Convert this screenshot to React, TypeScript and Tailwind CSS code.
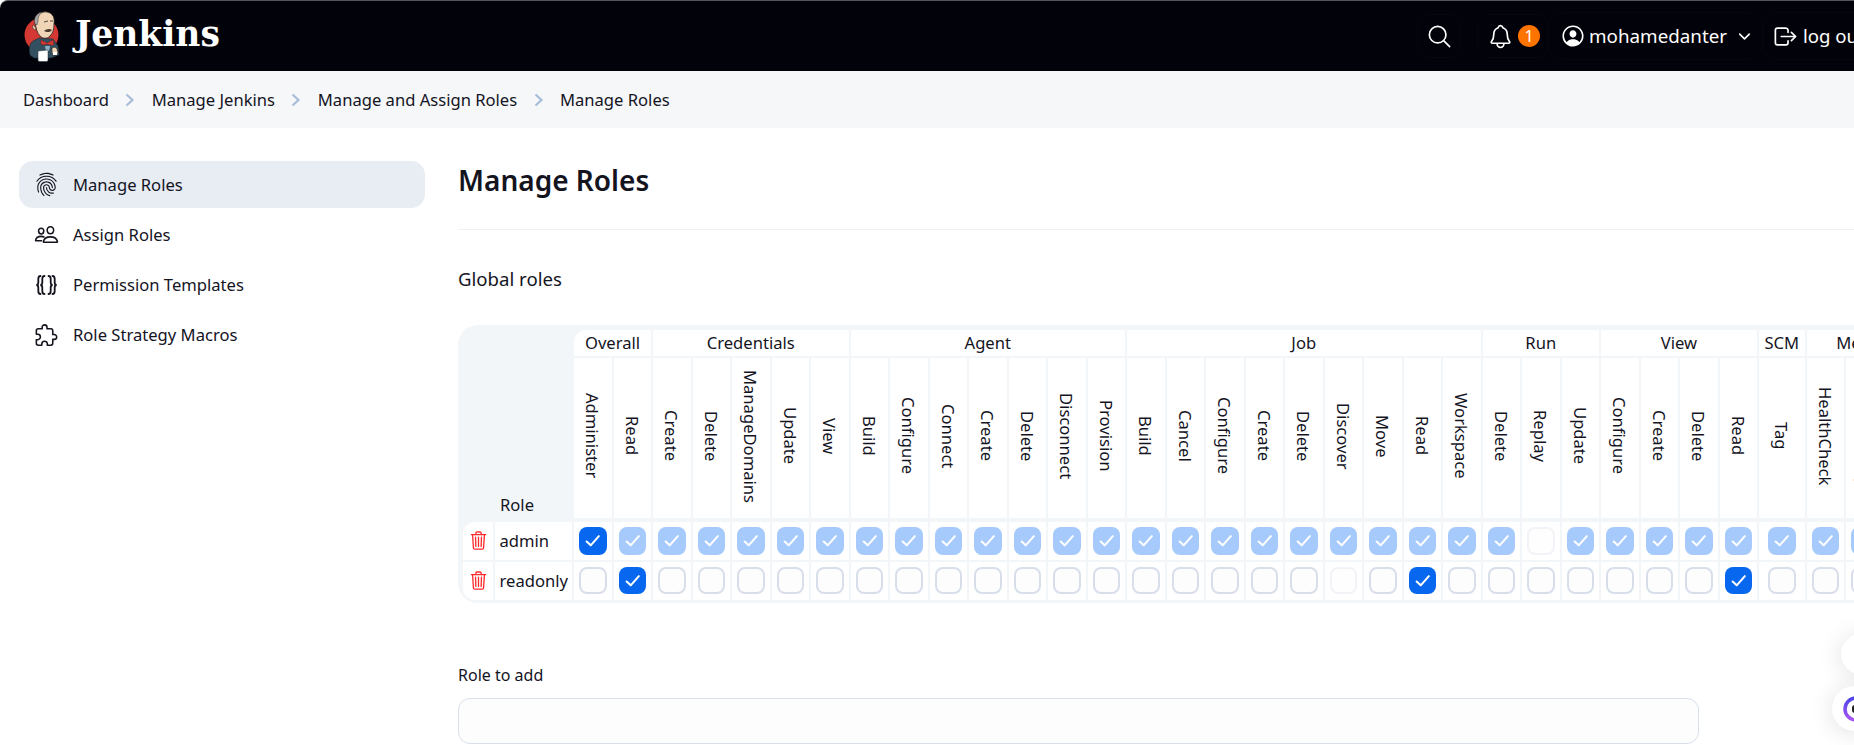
import React from "react";
import {
  IoSearchOutline,
  IoNotificationsOutline,
  IoPersonCircleOutline,
  IoChevronDownOutline,
  IoLogOutOutline,
  IoFingerPrintOutline,
  IoPeopleOutline,
  IoExtensionPuzzleOutline,
  IoTrashOutline,
} from "react-icons/io5";

type Group = { name: string; perms: string[] };

const groups: Group[] = [
  { name: "Overall", perms: ["Administer", "Read"] },
  { name: "Credentials", perms: ["Create", "Delete", "ManageDomains", "Update", "View"] },
  { name: "Agent", perms: ["Build", "Configure", "Connect", "Create", "Delete", "Disconnect", "Provision"] },
  { name: "Job", perms: ["Build", "Cancel", "Configure", "Create", "Delete", "Discover", "Move", "Read", "Workspace"] },
  { name: "Run", perms: ["Delete", "Replay", "Update"] },
  { name: "View", perms: ["Configure", "Create", "Delete", "Read"] },
  { name: "SCM", perms: ["Tag"] },
  { name: "Metrics", perms: ["HealthCheck", "ThreadDump", "View"] },
];

type BoxState = "dark" | "light" | "empty" | "faint";

const keyOf = (group: string, perm: string) => `${group}.${perm}`;

const adminState = (key: string): BoxState => {
  if (key === "Overall.Administer") return "dark";
  if (key === "Run.Replay") return "faint";
  return "light";
};

const readonlyState = (key: string): BoxState => {
  if (key === "Overall.Read" || key === "Job.Read" || key === "View.Read") return "dark";
  if (key === "Job.Discover") return "faint";
  return "empty";
};

const boxStyles: Record<BoxState, string> = {
  dark: "bg-[#0767ee]",
  light: "bg-[#a6cafc]",
  empty: "bg-[#fdfdfe] border-2 border-[#d8dfeb]",
  faint: "bg-[#fefefe] border-2 border-[#f1f3f7]",
};

const RoleBox = ({ state }: { state: BoxState }) => (
  <div className={`mx-auto h-[27.5px] w-[27.5px] rounded-[8px] ${boxStyles[state]}`}>
    {(state === "dark" || state === "light") && (
      <svg viewBox="0 0 27 27" className="h-[27.5px] w-[27.5px]" fill="none">
        <path d="M7.5 14.2l4 3.8 8-9" stroke="white" strokeWidth="2" strokeLinecap="round" strokeLinejoin="round" />
      </svg>
    )}
  </div>
);

const JenkinsLogo = () => (
  <svg viewBox="0 0 44 52" className="h-[52px] w-[44px] flex-none">
    <circle cx="21.5" cy="25" r="17" fill="#d33833" />
    <path d="M10 45c-1-6-1-11 3-14l6-3 14 1 5 7 1 9-8 3H14z" fill="#335061" stroke="#1d2c36" strokeWidth="0.6" />
    <path d="M15 13c0-8 6-12 12-11 6 1 8 6 7 12 0 5-1 9-4 12-3 3-7 3-10 0-3-3-4-8-5-13z" fill="#f0d6b7" stroke="#2a2320" strokeWidth="0.8" />
    <path d="M15 14c-2-6 2-12 8-12-4 2-5 5-5 9l-1 4z" fill="#a9a9a9" stroke="#2a2320" strokeWidth="0.5" />
    <path d="M14 15c-2 0-2 4 1 5l1-1z" fill="#f0d6b7" stroke="#2a2320" strokeWidth="0.6" />
    <path d="M24 12l4-1M30 11l3 0" stroke="#2a2320" strokeWidth="0.8" fill="none" />
    <path d="M24 21c2-2 6-3 8-1-1 2-5 3-8 1z" fill="#49392f" />
    <path d="M21 30l6 3 6-3 1 5-4 0-3-1-3 1-3-1z" fill="#d33833" stroke="#7c1d1a" strokeWidth="0.5" />
    <path d="M25 36l5 0-1 5-3 0z" fill="#8fb2c6" />
    <path d="M18 41l10-1 0 10c0 1-1 1.500-2 1.500h-6c-1 0-2-.5-2-1.500z" fill="#ffffff" stroke="#1d2c36" strokeWidth="0.5" />
    <path d="M32 38c2-1 4-1 5 1l1 4-1 2-4 0-1-3z" fill="#f0d6b7" stroke="#2a2320" strokeWidth="0.6" />
    <path d="M33 42l4 0 0 3-4 0z" fill="#ffffff" />
  </svg>
);

const BracesIcon = () => (
  <svg viewBox="0 0 25 24" className="h-[24px] w-[25px]" fill="none" stroke="#14141f" strokeWidth="1.800" strokeLinecap="round">
    <path d="M6.500 3C4.500 3 4.300 4 4.300 6v3.500C4.300 11 3.500 12 2.300 12c1.200 0 2 1 2 2.500V18c0 2 .2 3 2.200 3" />
    <path d="M10.500 3C8.500 3 8.300 4 8.300 6v3.500C8.300 11 7.500 12 6.300 12c1.200 0 2 1 2 2.500V18c0 2 .2 3 2.200 3" />
    <path d="M14.500 3c2 0 2.200 1 2.200 3v3.500c0 1.500.8 2.500 2 2.500-1.200 0-2 1-2 2.500V18c0 2-.2 3-2.200 3" />
    <path d="M18.500 3c2 0 2.200 1 2.200 3v3.500c0 1.500.8 2.500 2 2.500-1.200 0-2 1-2 2.500V18c0 2-.2 3-2.200 3" />
  </svg>
);

const crumbs = ["Dashboard", "Manage Jenkins", "Manage and Assign Roles", "Manage Roles"];

const sideItems = [
  { label: "Manage Roles", icon: <IoFingerPrintOutline className="h-[27px] w-[27px]" />, active: true },
  { label: "Assign Roles", icon: <IoPeopleOutline className="h-[29px] w-[29px]" />, active: false },
  { label: "Permission Templates", icon: <BracesIcon />, active: false },
  { label: "Role Strategy Macros", icon: <IoExtensionPuzzleOutline className="h-[30px] w-[30px]" />, active: false },
];

const roles = [
  { name: "admin", state: adminState, corner: "rounded-tl-[12px]", height: "h-[37.5px]" },
  { name: "readonly", state: readonlyState, corner: "rounded-bl-[12px]", height: "h-[38px]" },
];

export default function App() {
  return (
    <div className="h-screen w-screen overflow-hidden bg-white font-['Noto_Sans',sans-serif] text-[16.6px] text-[#14141f]">
      <div className="w-[1900px]">
        {/* Top bar */}
        <header className="flex h-[71px] items-center rounded-tl-[8px] border-t border-[#55555c] bg-[#02020a] pl-[20px] text-white">
          <JenkinsLogo />
          <span className="ml-[11px] mb-[2px] w-[150px] flex-none font-['DejaVu_Serif',serif] text-[34.5px] font-bold">Jenkins</span>
          <div className="ml-[1192px] flex items-center">
            <div className="flex h-[44px] w-[44px] items-center justify-center rounded-[10px] border border-[#06060e]">
              <IoSearchOutline className="h-[27px] w-[27px]" />
            </div>
            <div className="ml-[16px] flex h-[44px] w-[71px] items-center rounded-[10px] border border-[#06060e] pl-[9px]">
              <IoNotificationsOutline className="h-[27px] w-[27px]" />
              <span className="ml-[4px] flex h-[22px] w-[22px] items-center justify-center rounded-full bg-[#ff7300] text-[16px] leading-none">1</span>
            </div>
            <div className="ml-[1px] flex h-[48px] w-[213px] items-center rounded-[12px] border border-[#06060e] pl-[10px]">
              <IoPersonCircleOutline className="h-[26px] w-[26px]" />
              <span className="ml-[3px] text-[18.8px]">mohamedanter</span>
              <IoChevronDownOutline className="ml-[9px] h-[17px] w-[17px]" />
            </div>
            <div className="ml-[1px] flex h-[48px] items-center rounded-[12px] border border-[#06060e] pl-[8px] pr-[10px]">
              <IoLogOutOutline className="h-[27px] w-[27px]" />
              <span className="ml-[4px] text-[18.6px]">log out</span>
            </div>
          </div>
        </header>

        {/* Breadcrumb */}
        <nav className="flex h-[57px] items-center bg-[#f6f7f9] pl-[23px]">
          {crumbs.map((crumb, i) => (
            <React.Fragment key={crumb}>
              <span className="pt-[2px]">{crumb}</span>
              {i < crumbs.length - 1 && (
                <svg viewBox="0 0 10 14" className="mx-[16.4px] h-[14px] w-[10px]" fill="none">
                  <path d="M1.500 1.500L7.500 7l-6 5.500" stroke="#a6bcd8" strokeWidth="2.200" />
                </svg>
              )}
            </React.Fragment>
          ))}
        </nav>

        <div className="flex">
          {/* Sidebar */}
          <aside className="ml-[19px] mt-[33px] flex w-[406px] flex-none flex-col gap-[3px]">
            {sideItems.map((item) => (
              <div
                key={item.label}
                className={`flex h-[47px] items-center rounded-[14px] pl-[15px] ${item.active ? "bg-[#e8ecf3]" : ""}`}
              >
                <span className="flex w-[25px] justify-center">{item.icon}</span>
                <span className="ml-[14px] pt-[2px]">{item.label}</span>
              </div>
            ))}
          </aside>

          {/* Main */}
          <main className="ml-[33px] w-[1241px] flex-none">
            <h1 className="mt-[32px] h-[40px] text-[28px] font-semibold leading-[40px]">Manage Roles</h1>
            <hr className="mt-[29px] w-[1500px] border-[#eef0f3]" />
            <p className="mt-[37px] text-[18.6px] leading-[24px]">Global roles</p>

            <div className="mt-[34px] w-max rounded-[20px] bg-[#f3f6f9] px-[3px] pb-[1px] pt-[3px]">
              <table className="table-fixed border-separate border-spacing-[2px]">
                <colgroup>
                  <col className="w-[30px]" />
                  <col className="w-[77px]" />
                  {groups.flatMap((g) =>
                    g.perms.map((p) => (
                      <col key={keyOf(g.name, p)} className={g.name === "SCM" ? "w-[45.67px]" : "w-[37.5px]"} />
                    )),
                  )}
                </colgroup>
                <thead>
                  <tr className="h-[26px]">
                    <th rowSpan={2} className="border-b-2 border-[#f3f6f9] p-0" />
                    <th rowSpan={2} className="border-b-2 border-[#f3f6f9] p-0 pl-[5px] text-left align-bottom font-normal">
                      Role
                    </th>
                    {groups.map((g, i) => (
                      <th
                        key={g.name}
                        colSpan={g.perms.length}
                        className={`bg-white p-0 pt-[1px] text-center font-normal ${i === 0 ? "rounded-tl-[12px]" : ""}`}
                      >
                        {g.name}
                      </th>
                    ))}
                  </tr>
                  <tr className="h-[162px]">
                    {groups.flatMap((g) =>
                      g.perms.map((p) => (
                        <th key={keyOf(g.name, p)} className="border-b-2 border-[#f3f6f9] bg-white bg-clip-padding p-0 align-middle font-normal">
                          <div className="flex justify-center pb-[4px] pr-[2px]">
                            <span className="[writing-mode:vertical-rl]">{p}</span>
                          </div>
                        </th>
                      )),
                    )}
                  </tr>
                </thead>
                <tbody>
                  {roles.map((role) => (
                    <tr key={role.name} className={role.height}>
                      <td className={`bg-white p-0 ${role.corner}`}>
                        <IoTrashOutline className="mx-auto h-[21px] w-[21px] text-[#ff2a2a]" />
                      </td>
                      <td className="bg-white p-0 pl-[4.5px] pt-[1px]">{role.name}</td>
                      {groups.flatMap((g) =>
                        g.perms.map((p) => (
                          <td key={keyOf(g.name, p)} className="bg-white p-0">
                            <RoleBox state={role.state(keyOf(g.name, p))} />
                          </td>
                        )),
                      )}
                    </tr>
                  ))}
                </tbody>
              </table>
            </div>

            <label className="mt-[60px] block text-[16px] leading-[24px]">Role to add</label>
            <input className="mt-[11px] block h-[46px] w-full rounded-[12px] border border-[#d8dfeb] bg-[#fdfdfe]" />
          </main>
        </div>
      </div>

      {/* Floating widgets */}
      <div className="absolute left-[1841px] top-[633px] h-[42px] w-[42px] rounded-full bg-white shadow-[0_2px_24px_rgba(0,0,0,0.12)]" />
      <div className="absolute left-[1832px] top-[686px] flex h-[45px] w-[45px] items-center justify-center rounded-full bg-white shadow-[0_2px_24px_rgba(0,0,0,0.12)]">
        <svg viewBox="0 0 26 26" className="ml-[2px] h-[26px] w-[26px]">
          <defs>
            <linearGradient id="ring" x1="0" y1="0" x2="0" y2="1">
              <stop offset="0" stopColor="#4f46e5" />
              <stop offset="1" stopColor="#a855f7" />
            </linearGradient>
          </defs>
          <circle cx="13" cy="13" r="11" fill="none" stroke="url(#ring)" strokeWidth="3.500" />
          <rect x="9" y="9" width="8" height="8" rx="3" fill="#222" />
        </svg>
      </div>
    </div>
  );
}
